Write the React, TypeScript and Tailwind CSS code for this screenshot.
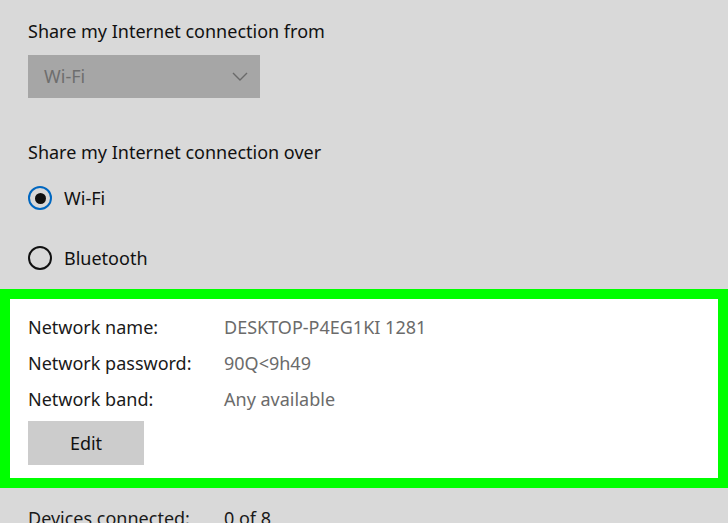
import { ReactNode } from 'react'

const FONT = { fontFamily: '"Noto Sans", "Open Sans", Arial, sans-serif' }

function Radio({ checked, label }: { checked: boolean; label: string }) {
  return (
    <div className="flex items-center h-[24px]">
      <span
        className={`flex items-center justify-center w-[24px] h-[24px] rounded-full border-[2.5px] ${
          checked ? 'border-[#0067c0]' : 'border-[#111]'
        }`}
      >
        {checked && <span className="w-[11px] h-[11px] rounded-full bg-[#111]" />}
      </span>
      <span className="ml-[12px] text-[18px] text-[#111] leading-[24px]">{label}</span>
    </div>
  )
}

function InfoRow({ label, value }: { label: string; value: ReactNode }) {
  return (
    <div className="flex items-center h-[36px] text-[18px] leading-[26px]">
      <span className="w-[196px] text-[#1a1a1a]">{label}</span>
      <span className="text-[#6b6b6b]">{value}</span>
    </div>
  )
}

export default function App() {
  return (
    <div className="w-[728px] h-[523px] overflow-hidden bg-[#d9d9d9]" style={FONT}>
      <div className="pt-[18px] px-[28px]">
        <h2 className="text-[18px] leading-[26px] text-[#111]">Share my Internet connection from</h2>
        <div className="mt-[11px] w-[232px] h-[43px] bg-[#a6a6a6] flex items-center justify-between pl-[16px] pr-[12px]">
          <span className="text-[18px] text-[#6e6e6e]">Wi-Fi</span>
          <svg width="16" height="9" viewBox="0 0 16 9" fill="none">
            <path d="M1 1l7 7 7-7" stroke="#6a6a6a" strokeWidth="1.4" />
          </svg>
        </div>

        <h2 className="mt-[41px] text-[18px] leading-[26px] text-[#111]">Share my Internet connection over</h2>
        <div className="mt-[21px]">
          <Radio checked label="Wi-Fi" />
        </div>
        <div className="mt-[36px]">
          <Radio checked={false} label="Bluetooth" />
        </div>
      </div>

      <div className="mt-[19px] border-[10px] border-[#00ff00] bg-white pt-[10px] pb-[13px] px-[18px]">
        <InfoRow label="Network name:" value="DESKTOP-P4EG1KI 1281" />
        <InfoRow label="Network password:" value="90Q<9h49" />
        <InfoRow label="Network band:" value="Any available" />
        <button className="mt-[4px] w-[116px] h-[44px] bg-[#cccccc] text-[18px] text-[#111]">Edit</button>
      </div>

      <div className="mt-[17px] px-[28px] flex items-center h-[26px] text-[18px]">
        <span className="w-[196px] text-[#1a1a1a]">Devices connected:</span>
        <span className="text-[#1a1a1a]">0 of 8</span>
      </div>
    </div>
  )
}
